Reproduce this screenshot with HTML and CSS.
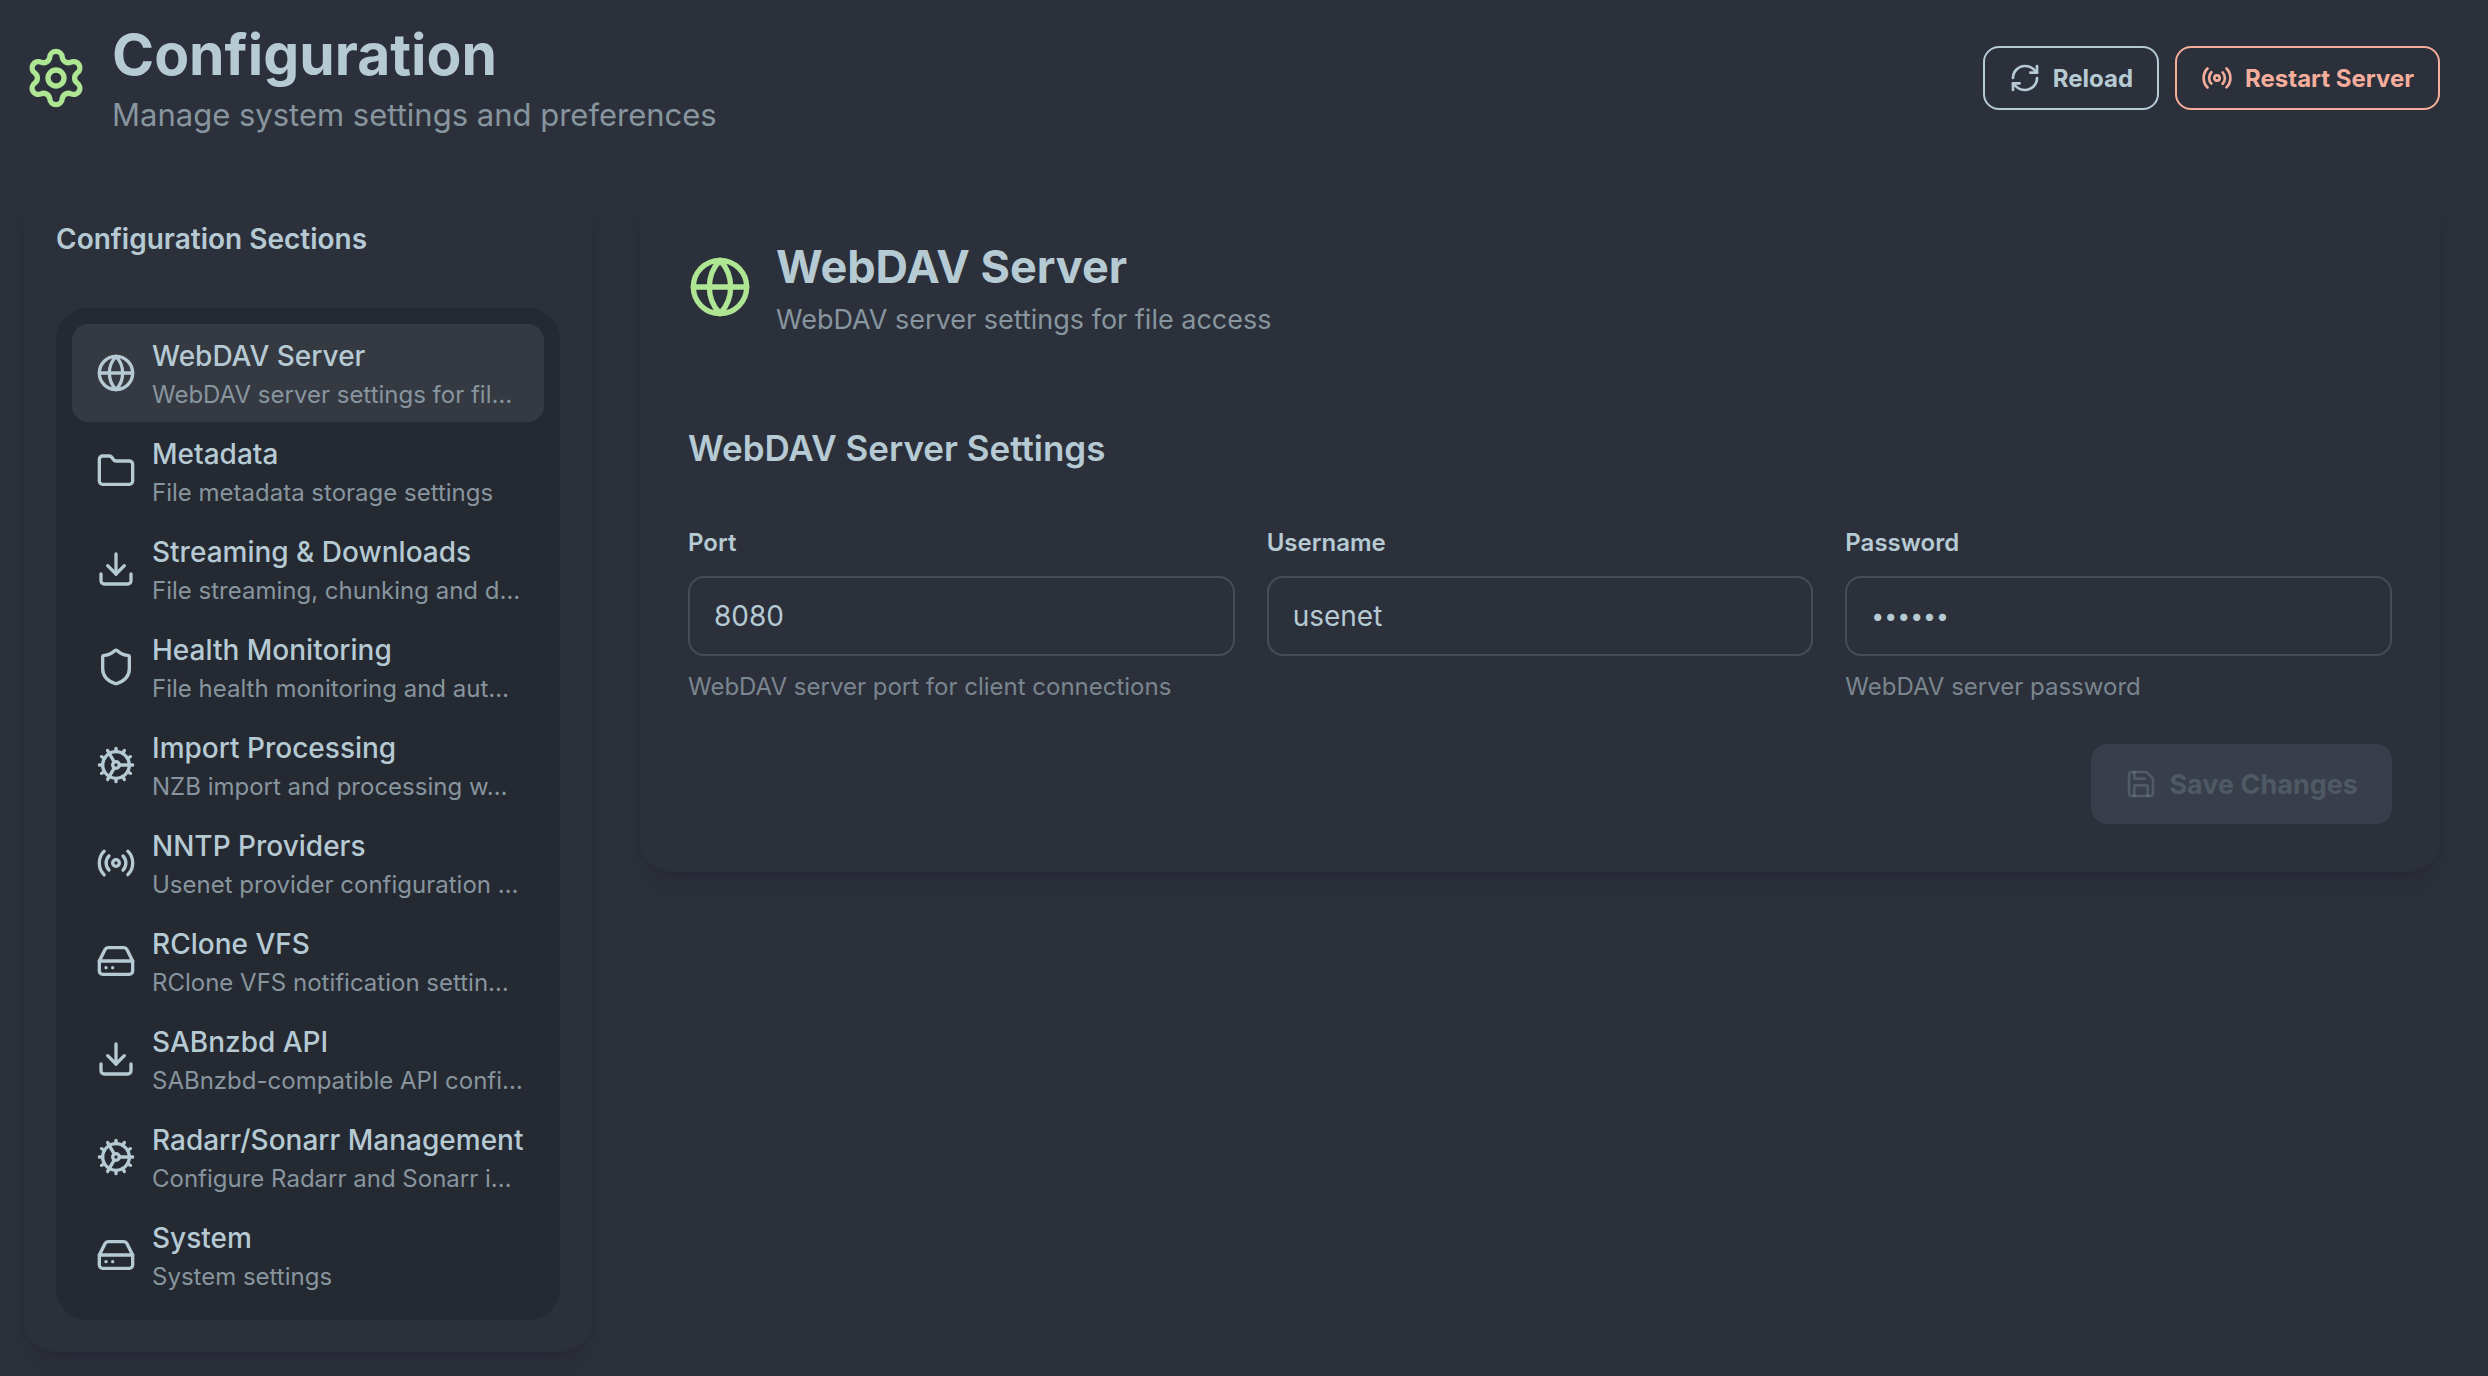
FILE: index.html
```html
<!DOCTYPE html>
<html lang="en">
<head>
<meta charset="utf-8">
<title>Configuration</title>
<link rel="stylesheet" href="styles.css">
</head>
<body>
<svg class="sprite" aria-hidden="true">
  <symbol id="settings" viewBox="0 0 24 24"><path d="M9.671 4.136a2.34 2.34 0 0 1 4.659 0 2.34 2.34 0 0 0 3.319 1.915 2.34 2.34 0 0 1 2.33 4.033 2.34 2.34 0 0 0 0 3.831 2.34 2.34 0 0 1-2.33 4.033 2.34 2.34 0 0 0-3.319 1.915 2.34 2.34 0 0 1-4.659 0 2.34 2.34 0 0 0-3.32-1.915 2.34 2.34 0 0 1-2.33-4.033 2.34 2.34 0 0 0 0-3.831A2.34 2.34 0 0 1 6.35 6.051a2.34 2.34 0 0 0 3.319-1.915"/><circle cx="12" cy="12" r="3"/></symbol>
  <symbol id="refresh" viewBox="0 0 24 24"><path d="M3 12a9 9 0 0 1 9-9 9.75 9.75 0 0 1 6.74 2.74L21 8"/><path d="M21 3v5h-5"/><path d="M21 12a9 9 0 0 1-9 9 9.75 9.75 0 0 1-6.74-2.74L3 16"/><path d="M8 16H3v5"/></symbol>
  <symbol id="radio" viewBox="0 0 24 24"><path d="M4.9 19.1C1 15.2 1 8.8 4.9 4.9"/><path d="M7.8 16.2c-2.3-2.3-2.3-6.1 0-8.5"/><circle cx="12" cy="12" r="2"/><path d="M16.2 7.8c2.3 2.3 2.3 6.1 0 8.5"/><path d="M19.1 4.9C23 8.8 23 15.1 19.1 19"/></symbol>
  <symbol id="globe" viewBox="0 0 24 24"><circle cx="12" cy="12" r="10"/><path d="M12 2a14.5 14.5 0 0 0 0 20 14.5 14.5 0 0 0 0-20"/><path d="M2 12h20"/></symbol>
  <symbol id="folder" viewBox="0 0 24 24"><path d="M20 20a2 2 0 0 0 2-2V8a2 2 0 0 0-2-2h-7.9a2 2 0 0 1-1.69-.9L9.6 3.9A2 2 0 0 0 7.93 3H4a2 2 0 0 0-2 2v13a2 2 0 0 0 2 2Z"/></symbol>
  <symbol id="download" viewBox="0 0 24 24"><path d="M12 15V3"/><path d="M21 15v4a2 2 0 0 1-2 2H5a2 2 0 0 1-2-2v-4"/><path d="m7 10 5 5 5-5"/></symbol>
  <symbol id="shield" viewBox="0 0 24 24"><path d="M20 13c0 5-3.5 7.5-7.66 8.95a1 1 0 0 1-.67-.01C7.5 20.5 4 18 4 13V6a1 1 0 0 1 1-1c2 0 4.5-1.2 6.24-2.72a1.17 1.17 0 0 1 1.52 0C14.51 3.81 17 5 19 5a1 1 0 0 1 1 1z"/></symbol>
  <symbol id="cog" viewBox="0 0 24 24"><path d="M11 10.27 7 3.34"/><path d="m11 13.73-4 6.93"/><path d="M12 22v-2"/><path d="M12 2v2"/><path d="M14 12h8"/><path d="m17 20.66-1-1.73"/><path d="m17 3.34-1 1.73"/><path d="M2 12h2"/><path d="m20.66 17-1.73-1"/><path d="m20.66 7-1.73 1"/><path d="m3.34 17 1.73-1"/><path d="m3.34 7 1.73 1"/><circle cx="12" cy="12" r="2"/><circle cx="12" cy="12" r="8"/></symbol>
  <symbol id="drive" viewBox="0 0 24 24"><path d="M22 12H2"/><path d="M5.45 5.11 2 12v6a2 2 0 0 0 2 2h16a2 2 0 0 0 2-2v-6l-3.45-6.89A2 2 0 0 0 16.76 4H7.24a2 2 0 0 0-1.79 1.11z"/><path d="M6 16h.01"/><path d="M10 16h.01"/></symbol>
  <symbol id="save" viewBox="0 0 24 24"><path d="M15.2 3a2 2 0 0 1 1.4.6l3.8 3.8a2 2 0 0 1 .6 1.4V19a2 2 0 0 1-2 2H5a2 2 0 0 1-2-2V5a2 2 0 0 1 2-2z"/><path d="M17 21v-7a1 1 0 0 0-1-1H8a1 1 0 0 0-1 1v7"/><path d="M7 3v4a1 1 0 0 0 1 1h7"/></symbol>
</svg>

<header class="page-header">
  <div class="heading">
    <svg class="icon icon-lg"><use href="#settings"/></svg>
    <div>
      <h1>Configuration</h1>
      <p class="lead">Manage system settings and preferences</p>
    </div>
  </div>
  <div class="actions">
    <button class="btn btn-outline" type="button"><svg class="icon icon-sm"><use href="#refresh"/></svg>Reload</button>
    <button class="btn btn-outline btn-warning" type="button"><svg class="icon icon-sm"><use href="#radio"/></svg>Restart Server</button>
  </div>
</header>

<main class="layout">
  <aside class="card sidebar">
    <h2 class="sidebar-title">Configuration Sections</h2>
    <nav class="menu">
      <a class="item active" href="#webdav"><svg class="icon"><use href="#globe"/></svg><span class="item-text"><span class="item-title">WebDAV Server</span><span class="item-desc">WebDAV server settings for fil…</span></span></a>
      <a class="item" href="#metadata"><svg class="icon"><use href="#folder"/></svg><span class="item-text"><span class="item-title">Metadata</span><span class="item-desc">File metadata storage settings</span></span></a>
      <a class="item" href="#streaming"><svg class="icon"><use href="#download"/></svg><span class="item-text"><span class="item-title">Streaming &amp; Downloads</span><span class="item-desc">File streaming, chunking and d…</span></span></a>
      <a class="item" href="#health"><svg class="icon"><use href="#shield"/></svg><span class="item-text"><span class="item-title">Health Monitoring</span><span class="item-desc">File health monitoring and aut…</span></span></a>
      <a class="item" href="#import"><svg class="icon"><use href="#cog"/></svg><span class="item-text"><span class="item-title">Import Processing</span><span class="item-desc">NZB import and processing w…</span></span></a>
      <a class="item" href="#nntp"><svg class="icon"><use href="#radio"/></svg><span class="item-text"><span class="item-title">NNTP Providers</span><span class="item-desc">Usenet provider configuration …</span></span></a>
      <a class="item" href="#rclone"><svg class="icon"><use href="#drive"/></svg><span class="item-text"><span class="item-title">RClone VFS</span><span class="item-desc">RClone VFS notification settin…</span></span></a>
      <a class="item" href="#sabnzbd"><svg class="icon"><use href="#download"/></svg><span class="item-text"><span class="item-title">SABnzbd API</span><span class="item-desc">SABnzbd-compatible API confi…</span></span></a>
      <a class="item" href="#arrs"><svg class="icon"><use href="#cog"/></svg><span class="item-text"><span class="item-title">Radarr/Sonarr Management</span><span class="item-desc">Configure Radarr and Sonarr i…</span></span></a>
      <a class="item" href="#system"><svg class="icon"><use href="#drive"/></svg><span class="item-text"><span class="item-title">System</span><span class="item-desc">System settings</span></span></a>
    </nav>
  </aside>

  <section class="card panel">
    <div class="heading">
      <svg class="icon icon-lg"><use href="#globe"/></svg>
      <div>
        <h2 class="panel-title">WebDAV Server</h2>
        <p class="panel-desc">WebDAV server settings for file access</p>
      </div>
    </div>
    <form>
      <h3>WebDAV Server Settings</h3>
      <div class="fields">
        <div class="field">
          <label for="port">Port</label>
          <input id="port" type="text" inputmode="numeric" value="8080">
          <p class="hint">WebDAV server port for client connections</p>
        </div>
        <div class="field">
          <label for="username">Username</label>
          <input id="username" type="text" value="usenet">
        </div>
        <div class="field">
          <label for="password">Password</label>
          <input id="password" type="password" value="usenet">
          <p class="hint">WebDAV server password</p>
        </div>
      </div>
      <div class="form-actions">
        <button class="btn btn-save" type="submit" disabled><svg class="icon icon-sm"><use href="#save"/></svg>Save Changes</button>
      </div>
    </form>
  </section>
</main>
</body>
</html>
```
FILE: styles.css
```css
:root {
  --base: #2c303b;
  --base-dark: #252932;
  --content: #b6cad4;
  --muted: #87959e;
  --primary: #aee693;
  --warning: #f5ae9b;
}

* { box-sizing: border-box; }

body {
  margin: 0;
  padding: 18px 48px 24px 24px;
  background: var(--base);
  color: var(--content);
  font-family: Inter, "Liberation Sans", sans-serif;
}

h1, h2, h3, p { margin: 0; }

.sprite { display: none; }

.icon {
  width: 40px;
  height: 40px;
  flex: none;
  fill: none;
  stroke: currentColor;
  stroke-width: 2;
  stroke-linecap: round;
  stroke-linejoin: round;
}
.icon-sm { width: 32px; height: 32px; }
.icon-lg { width: 64px; height: 64px; color: var(--primary); }

.page-header {
  display: flex;
  justify-content: space-between;
  align-items: center;
  margin-bottom: 48px;
}
.heading { display: flex; align-items: center; gap: 24px; }

h1 { font-size: 57px; line-height: 74px; font-weight: 700; }
.lead { font-size: 31px; line-height: 46px; color: var(--muted); }

.actions { display: flex; gap: 16px; }

.btn {
  display: inline-flex;
  align-items: center;
  gap: 12px;
  border: 2px solid transparent;
  border-radius: 16px;
  background: none;
  font-family: inherit;
  font-weight: 700;
}
.btn-outline {
  height: 64px;
  padding: 0 24px;
  border-color: currentColor;
  color: var(--content);
  font-size: 24px;
}
.btn-warning { color: var(--warning); }
.btn-save {
  height: 80px;
  padding: 0 32px;
  background: #393f4a;
  color: rgba(178, 204, 214, 0.2);
  font-size: 27px;
}

.layout {
  display: grid;
  grid-template-columns: 568px 1fr;
  gap: 48px;
  align-items: start;
}
.card {
  min-width: 0;
  border-radius: 32px;
  box-shadow: 0 20px 30px -6px rgba(20, 16, 28, 0.1), 0 8px 12px -8px rgba(20, 16, 28, 0.2);
}

.sidebar { padding: 32px; }
.sidebar-title {
  margin-bottom: 48px;
  font-size: 28px;
  line-height: 42px;
  font-weight: 600;
}
.menu {
  padding: 16px;
  border-radius: 32px;
  background: var(--base-dark);
}
.item {
  display: flex;
  align-items: center;
  gap: 16px;
  padding: 10px 24px;
  border-radius: 16px;
  color: inherit;
  text-decoration: none;
}
.item.active { background: #353942; }
.item-text { min-width: 0; }
.item-title, .item-desc { display: block; white-space: nowrap; }
.item-title { font-size: 28px; line-height: 44px; font-weight: 500; }
.item-desc { font-size: 24px; line-height: 34px; color: var(--muted); }

.panel { padding: 48px; }
.panel-title { font-size: 45px; line-height: 66px; font-weight: 700; }
.panel-desc { font-size: 27px; line-height: 40px; color: var(--muted); }

h3 {
  margin: 84px 0 52px;
  font-size: 35px;
  line-height: 48px;
  font-weight: 600;
}
.fields {
  display: grid;
  grid-template-columns: repeat(3, 1fr);
  gap: 32px;
}
.field { min-width: 0; }
.field label {
  display: block;
  margin-bottom: 14px;
  font-size: 24px;
  line-height: 38px;
  font-weight: 600;
}
.field input {
  display: block;
  width: 100%;
  height: 80px;
  padding: 0 24px;
  border: 2px solid #474d58;
  border-radius: 16px;
  background: transparent;
  color: inherit;
  font-family: inherit;
  font-size: 28px;
}
.field input[type="password"] { font-size: 23px; }
.hint {
  margin-top: 12px;
  font-size: 24px;
  line-height: 38px;
  color: #7a868f;
}
.form-actions {
  display: flex;
  justify-content: flex-end;
  margin-top: 38px;
}
```
